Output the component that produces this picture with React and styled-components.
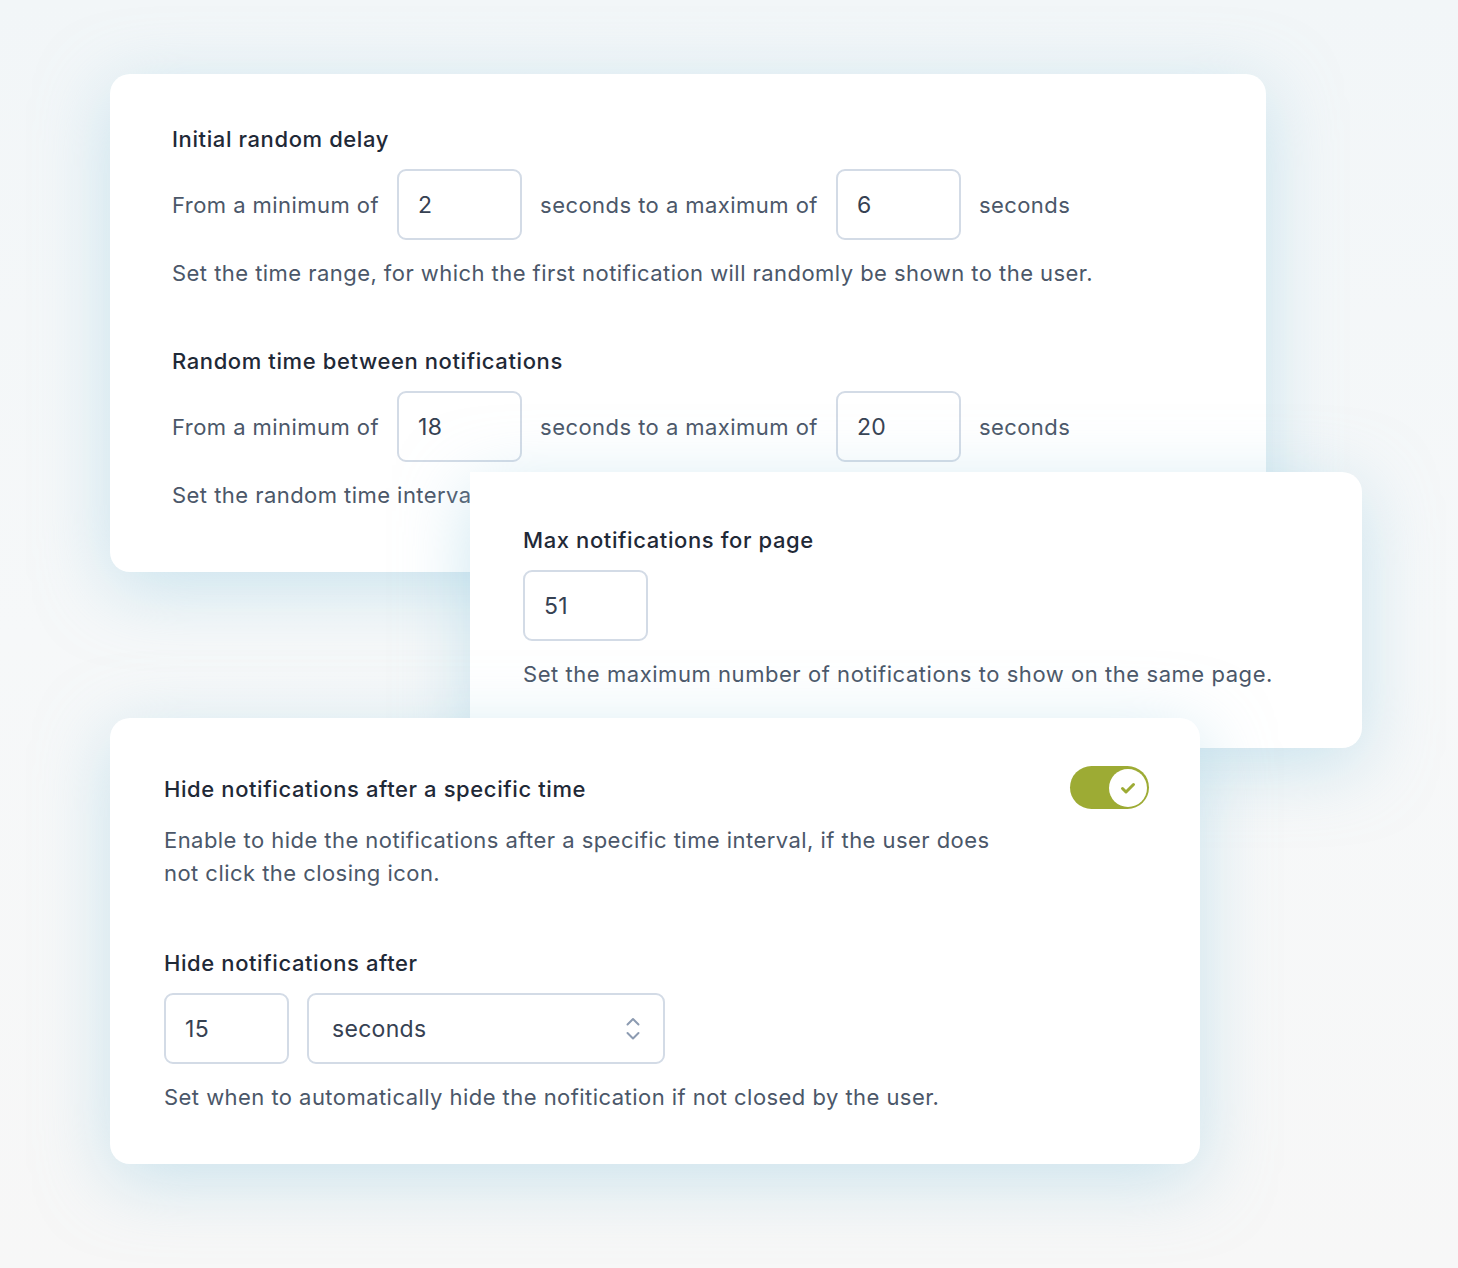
import React from "react";
import styled, { createGlobalStyle } from "styled-components";

const Global = createGlobalStyle`
  html, body { margin: 0; padding: 0; }
  body {
    font-family: Inter, "Noto Sans", "Liberation Sans", sans-serif;
    background: linear-gradient(180deg, #f2f6f8 0%, #f6f8f9 50%, #f7f7f7 100%);
    -webkit-font-smoothing: antialiased;
  }
  * { box-sizing: border-box; }
`;

const Canvas = styled.div`
  width: 1458px;
  height: 1268px;
  padding-top: 74px;
  display: flex;
  flex-direction: column;
  align-items: flex-start;
  overflow: hidden;
`;

const Card = styled.section`
  position: relative;
  z-index: ${(p) => p.$layer};
  width: ${(p) => p.$w}px;
  margin-left: ${(p) => p.$left}px;
  margin-top: ${(p) => p.$top || 0}px;
  padding: ${(p) => p.$pad};
  background: #ffffff;
  border-radius: ${(p) => p.$radius || "20px"};
  box-shadow: 0 16px 70px rgba(158, 208, 228, 0.5);
  display: flex;
  flex-direction: column;
`;

const Section = styled.div`
  display: flex;
  flex-direction: column;
  & + & {
    margin-top: ${(p) => p.$spacing || 59}px;
  }
`;

const Heading = styled.h3`
  margin: 0;
  font-size: 22px;
  line-height: 30px;
  font-weight: 500;
  color: #1f2937;
  letter-spacing: 0.6px;
  white-space: nowrap;
`;

const Row = styled.div`
  display: flex;
  align-items: center;
  gap: 18px;
  margin-top: 15px;
`;

const Label = styled.span`
  font-size: 22px;
  line-height: 30px;
  color: #4b5769;
  letter-spacing: 0.45px;
  white-space: nowrap;
`;

const Help = styled.p`
  margin: ${(p) => p.$mt || 18}px 0 0;
  font-size: 22px;
  line-height: ${(p) => p.$lh || 30}px;
  color: #4b5769;
  letter-spacing: ${(p) => p.$ls || 0.45}px;
  max-width: ${(p) => p.$max || "none"};
  white-space: ${(p) => (p.$nowrap ? "nowrap" : "normal")};
`;

const Field = styled.div`
  width: ${(p) => p.$w || 125}px;
  height: 71px;
  border: 2px solid #d3dbe6;
  border-radius: 9px;
  background: #fff;
  display: flex;
  align-items: center;
  justify-content: space-between;
  padding: 0 22px 0 ${(p) => p.$padLeft || 19}px;
  font-size: 23px;
  letter-spacing: 0.3px;
  color: #364152;
  flex-shrink: 0;
`;

const HeaderRow = styled.div`
  display: flex;
  align-items: center;
  justify-content: space-between;
  height: 30px;
`;

const Toggle = styled.div`
  width: 79px;
  height: 43px;
  border-radius: 22px;
  background: #9dab34;
  display: flex;
  align-items: center;
  justify-content: flex-end;
  padding-right: 2px;
  margin-top: -3px;
  flex-shrink: 0;
`;

const Knob = styled.div`
  width: 38px;
  height: 38px;
  border-radius: 50%;
  background: #fff;
  display: flex;
  align-items: center;
  justify-content: center;
`;

const Chevrons = () => (
  <svg width="16" height="26" viewBox="0 0 16 26" fill="none" stroke="#8c9bb1" strokeWidth="2" strokeLinecap="round" strokeLinejoin="round">
    <path d="M2.5 8.5 L8 3 L13.5 8.5" />
    <path d="M2.5 17 L8 22.5 L13.5 17" />
  </svg>
);

const Check = () => (
  <svg width="16" height="14" viewBox="0 0 16 14" fill="none" stroke="#9dab34" strokeWidth="3" strokeLinecap="round" strokeLinejoin="round">
    <path d="M2.5 7.5 L6 11 L13.5 3.5" />
  </svg>
);

const RangeRow = ({ min, max }) => (
  <Row>
    <Label>From a minimum of</Label>
    <Field>{min}</Field>
    <Label>seconds to a maximum of</Label>
    <Field>{max}</Field>
    <Label>seconds</Label>
  </Row>
);

export default function App() {
  return (
    <>
      <Global />
      <Canvas>
        <Card $layer={1} $w={1156} $left={110} $pad="50px 62px 62px">
          <Section>
            <Heading>Initial random delay</Heading>
            <RangeRow min="2" max="6" />
            <Help>Set the time range, for which the first notification will randomly be shown to the user.</Help>
          </Section>
          <Section>
            <Heading>Random time between notifications</Heading>
            <RangeRow min="18" max="20" />
            <Help $nowrap>Set the random time interval between notifications shown to the user.</Help>
          </Section>
        </Card>

        <Card $layer={2} $w={892} $left={470} $top={-100} $pad="53px 53px 59px" $radius="0 20px 20px 0">
          <Section>
            <Heading>Max notifications for page</Heading>
            <Row>
              <Field>51</Field>
            </Row>
            <Help $ls={0.55}>Set the maximum number of notifications to show on the same page.</Help>
          </Section>
        </Card>

        <Card $layer={3} $w={1090} $left={110} $top={-30} $pad="56px 51px 52px 54px">
          <Section>
            <HeaderRow>
              <Heading>Hide notifications after a specific time</Heading>
              <Toggle>
                <Knob>
                  <Check />
                </Knob>
              </Toggle>
            </HeaderRow>
            <Help $lh={33} $max="850px" $mt={20}>
              Enable to hide the notifications after a specific time interval, if the user does not click the closing icon.
            </Help>
          </Section>
          <Section $spacing={58}>
            <Heading>Hide notifications after</Heading>
            <Row>
              <Field>15</Field>
              <Field $w={358} $padLeft={23}>
                seconds
                <Chevrons />
              </Field>
            </Row>
            <Help>Set when to automatically hide the nofitication if not closed by the user.</Help>
          </Section>
        </Card>
      </Canvas>
    </>
  );
}
